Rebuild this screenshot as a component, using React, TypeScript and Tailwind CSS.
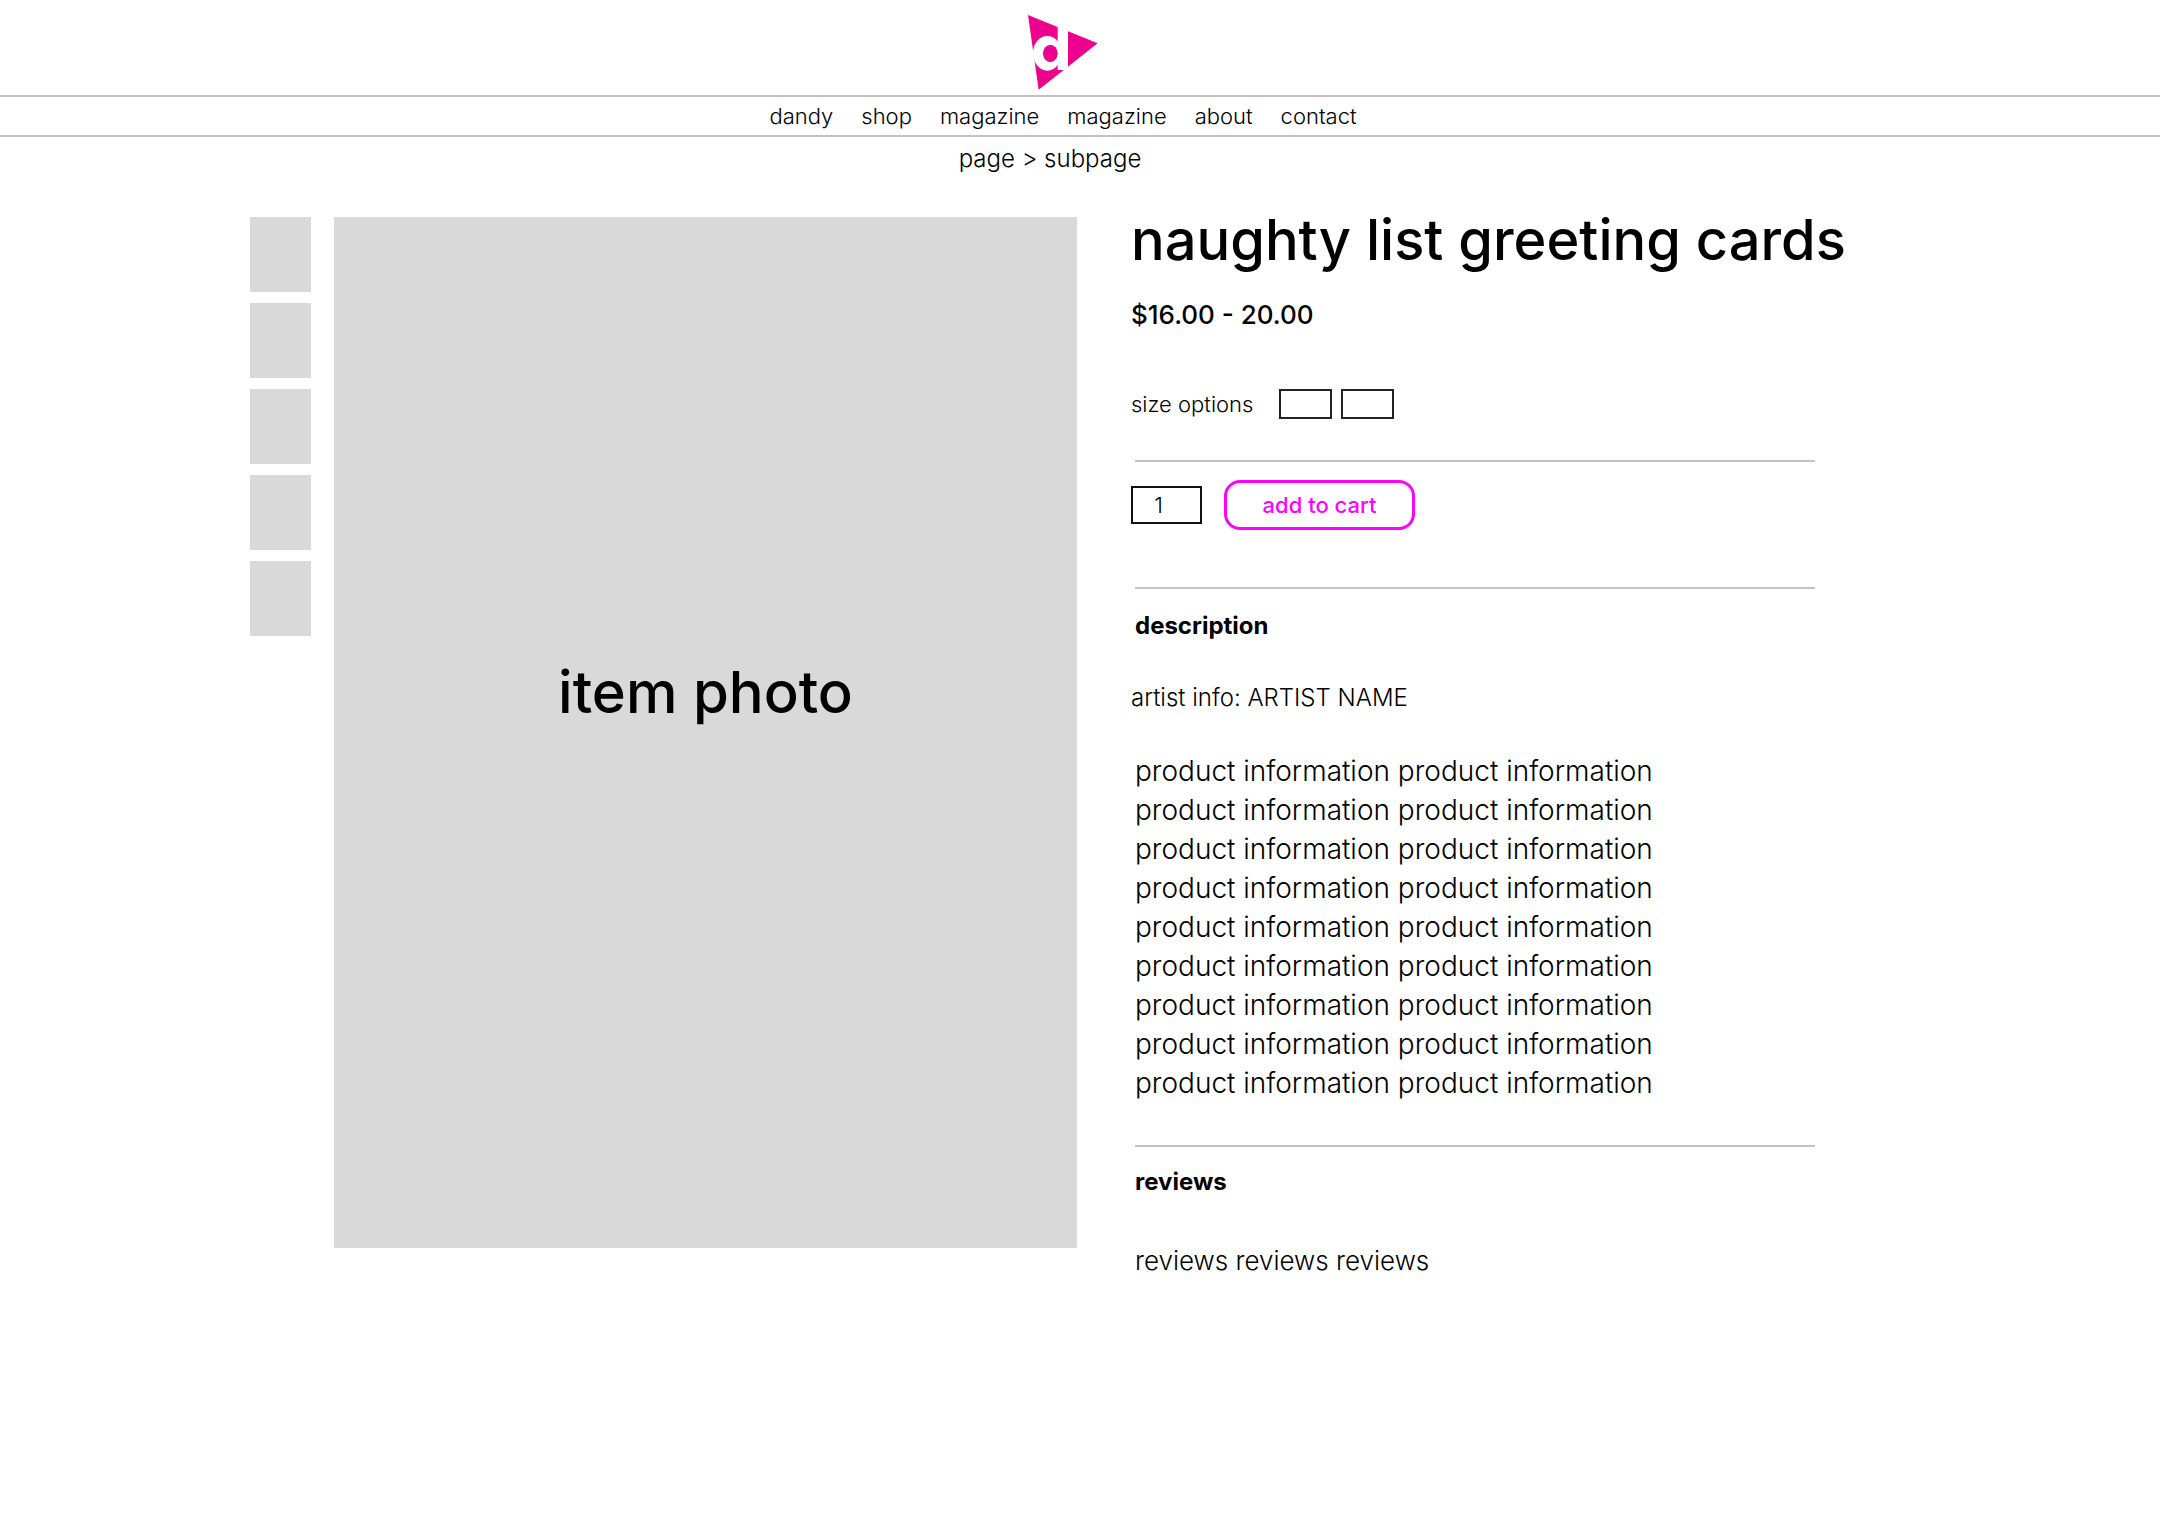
const NAV = [
  { id: "dandy", label: "dandy" },
  { id: "shop", label: "shop" },
  { id: "magazine", label: "magazine" },
  { id: "magazine-2", label: "magazine" },
  { id: "about", label: "about" },
  { id: "contact", label: "contact" },
];

const THUMBS = [1, 2, 3, 4, 5];
const SIZES = ["small", "large"];
const INFO_LINES = 9;

function Logo() {
  return (
    <svg viewBox="84 45 210 225" className="h-[75px] w-[70px]" aria-hidden="true">
      <path d="M84 45 L293 130 L116 269 Z" fill="#ec008c" />
      {/* ring and stem cut out of the triangle */}
      <ellipse cx="142" cy="160" rx="43" ry="52" fill="#fff" />
      <rect x="173" y="45" width="31" height="165" fill="#fff" />
      <ellipse cx="151" cy="160" rx="22" ry="26" fill="#ec008c" />
    </svg>
  );
}

function Header() {
  return (
    <header>
      <div className="flex justify-center pt-[15px] pr-[34px] pb-[5px]">
        <a href="#home" aria-label="dandy home">
          <Logo />
        </a>
      </div>
      <nav className="flex h-[42px] items-center justify-center gap-7 border-y-2 border-[#c2c2c2] pr-[34px] text-[22px]">
        {NAV.map((item) => (
          <a key={item.id} href={`#${item.id}`}>
            {item.label}
          </a>
        ))}
      </nav>
      <p className="mt-1.5 pr-[60px] text-center text-[24px] leading-8">
        <a href="#page">page</a> &gt; <a href="#subpage">subpage</a>
      </p>
    </header>
  );
}

function Gallery() {
  return (
    <>
      <div className="flex w-[61px] shrink-0 flex-col gap-[11px]">
        {THUMBS.map((n) => (
          <button key={n} aria-label={`photo ${n}`} className="h-[75px] w-full bg-[#d9d9d9]" />
        ))}
      </div>
      <div className="ml-[23px] flex aspect-[743/1031] w-[743px] items-center justify-center bg-[#d9d9d9] pb-20 text-[58px] font-medium">
        item photo
      </div>
    </>
  );
}

function Divider({ className }: { className: string }) {
  return <hr className={`ml-1 max-w-[680px] border-t-2 border-[#c2c2c2] ${className}`} />;
}

function Details() {
  return (
    <section className="ml-[54px] min-w-0 flex-1">
      <h1 className="text-[56px] leading-[46px] font-medium whitespace-nowrap">
        naughty list greeting cards
      </h1>
      <p className="mt-9 text-[26px] leading-8 font-medium">$16.00 - 20.00</p>

      <fieldset className="mt-[58px] flex h-[30px] items-center">
        <legend className="float-left mr-[26px] text-[22px] leading-[30px]">size options</legend>
        <div className="flex gap-[9px]">
          {SIZES.map((size) => (
            <input
              key={size}
              type="radio"
              name="size"
              value={size}
              aria-label={size}
              className="h-[30px] w-[53px] appearance-none border-2 border-[#222]"
            />
          ))}
        </div>
      </fieldset>

      <Divider className="mt-[41px]" />

      <form className="mt-[18px] flex items-center gap-[22px]" onSubmit={(e) => e.preventDefault()}>
        <input
          type="text"
          defaultValue="1"
          aria-label="quantity"
          className="h-[38px] w-[71px] border-2 border-[#111] pr-4 text-center text-[22px]"
        />
        <button className="h-[50px] w-[191px] rounded-2xl border-3 border-[#ff00ff] text-[22px] font-medium text-[#ff00ff]">
          add to cart
        </button>
      </form>

      <Divider className="mt-[57px]" />

      <h2 className="mt-[21px] ml-1 text-[24px] leading-8 font-bold">description</h2>
      <p className="mt-9 text-[24px] leading-[39px]">artist info: ARTIST NAME</p>
      <div className="mt-[35px] ml-1 text-[28px] leading-[39px]">
        {Array.from({ length: INFO_LINES }, (_, i) => (
          <p key={i}>product information product information</p>
        ))}
      </div>

      <Divider className="mt-[42px]" />

      <h2 className="mt-[19px] ml-1 text-[24px] leading-8 font-bold">reviews</h2>
      <p className="mt-[43px] ml-1 text-[26px] leading-[39px]">reviews reviews reviews</p>
    </section>
  );
}

export default function App() {
  return (
    <div className="min-h-screen bg-white font-['Inter',sans-serif] font-light text-black">
      <Header />
      <main className="mx-auto mt-[42px] flex max-w-[1660px] items-start">
        <Gallery />
        <Details />
      </main>
    </div>
  );
}
